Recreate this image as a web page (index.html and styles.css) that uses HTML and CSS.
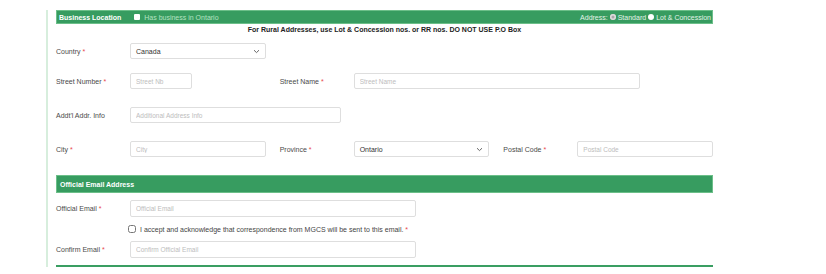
FILE: index.html
```html
<!DOCTYPE html>
<html lang="en">
<head>
  <meta charset="UTF-8">
  <title>Business Location</title>
  <link rel="stylesheet" href="styles.css">
</head>
<body>
  <div class="page">
    <div class="bar">
      <div class="bar-left">
        <span class="bar-title">Business Location</span>
        <span class="box"></span>
        <span class="muted">Has business in Ontario</span>
      </div>
      <div class="bar-right">
        Address: <span class="radio off"></span> Standard <span class="radio"></span> Lot &amp; Concession
      </div>
    </div>
    <div class="notice">For Rural Addresses, use Lot &amp; Concession nos. or RR nos. DO NOT USE P.O Box</div>

    <div class="grid row first">
      <div class="cell">
        <label>Country <b>*</b></label>
        <div class="select">Canada
          <svg width="7" height="5" viewBox="0 0 7 5"><path d="M1 1.2 L3.5 3.6 L6 1.2" fill="none" stroke="#666" stroke-width="1"/></svg>
        </div>
      </div>
    </div>

    <div class="grid row second">
      <div class="cell">
        <label>Street Number <b>*</b></label>
        <input class="short" type="text" placeholder="Street Nb">
      </div>
      <div class="cell span2">
        <label>Street Name <b>*</b></label>
        <input class="long" type="text" placeholder="Street Name">
      </div>
    </div>

    <div class="grid row">
      <div class="cell span3">
        <label>Addt'l Addr. Info</label>
        <input class="mid" type="text" placeholder="Additional Address Info">
      </div>
    </div>

    <div class="grid row">
      <div class="cell">
        <label>City <b>*</b></label>
        <input type="text" placeholder="City">
      </div>
      <div class="cell">
        <label>Province <b>*</b></label>
        <div class="select">Ontario
          <svg width="7" height="5" viewBox="0 0 7 5"><path d="M1 1.2 L3.5 3.6 L6 1.2" fill="none" stroke="#666" stroke-width="1"/></svg>
        </div>
      </div>
      <div class="cell">
        <label>Postal Code <b>*</b></label>
        <input type="text" placeholder="Postal Code">
      </div>
    </div>

    <div class="section-head">Official Email Address</div>

    <div class="email-row">
      <label>Official Email <b>*</b></label>
      <input class="long" type="text" placeholder="Official Email">
    </div>
    <div class="accept">
      <input type="checkbox">
      <span>I accept and acknowledge that correspondence from MGCS will be sent to this email. <b>*</b></span>
    </div>
    <div class="email-row">
      <label>Confirm Email <b>*</b></label>
      <input class="long" type="text" placeholder="Confirm Official Email">
    </div>

    <div class="section-end"></div>
  </div>
</body>
</html>
```

FILE: styles.css
```css
body {
  margin: 0;
  padding: 0;
  font-family: "Liberation Sans", Arial, sans-serif;
  font-size: 7px;
  background: #fff;
  color: #4a4a4a;
}
.page {
  margin-left: 46px;
  width: 657px;
  padding-left: 8px;
  border-left: 2px solid #d7eedd;
}
.bar {
  margin-top: 10px;
  height: 12px;
  background: #379c60;
  border: 1px solid #6cbf89;
  display: flex;
  justify-content: space-between;
  align-items: center;
  padding: 0 1px;
  color: #fff;
}
.bar-left {
  display: flex;
  align-items: center;
}
.bar-title {
  font-weight: bold;
  margin-left: 1px;
  margin-right: 13px;
}
.box {
  width: 6px;
  height: 6px;
  background: #fff;
  border-radius: 1px;
  margin-right: 4px;
}
.muted {
  color: #b4e2c1;
}
.bar-right {
  display: flex;
  align-items: center;
  gap: 2px;
  color: #e3f3e8;
}
.radio {
  display: inline-block;
  width: 6px;
  height: 6px;
  border-radius: 50%;
  background: #fff;
}
.radio.off {
  background: #a9a9a9;
  box-shadow: inset 0 0 0 1.5px #dcdcdc;
}
.notice {
  text-align: center;
  font-weight: bold;
  color: #222;
  line-height: 10px;
  margin-top: 1px;
}
.grid {
  display: grid;
  grid-template-columns: repeat(3, 1fr);
  column-gap: 14px;
}
.row {
  margin-top: 18px;
}
.row.first {
  margin-top: 8px;
}
.row.second {
  margin-top: 14px;
}
.cell {
  display: flex;
  align-items: center;
  height: 16px;
}
.span2 {
  grid-column: span 2;
}
.span3 {
  grid-column: span 3;
}
label {
  width: 74px;
  flex: none;
  color: #4a4a4a;
}
label b {
  color: #e8474c;
  font-weight: normal;
}
input[type="text"] {
  box-sizing: border-box;
  height: 16px;
  flex: 1;
  min-width: 0;
  border: 1px solid #dedede;
  border-radius: 2px;
  padding: 0 5px;
  font-family: inherit;
  font-size: 6.5px;
  outline: none;
}
input::placeholder {
  color: #bdbdbd;
}
input.short {
  flex: none;
  width: 62px;
}
input.long {
  flex: none;
  width: 286px;
}
input.mid {
  flex: none;
  width: 211px;
}
.select {
  box-sizing: border-box;
  height: 16px;
  flex: 1;
  border: 1px solid #dedede;
  border-radius: 2px;
  padding: 0 5px;
  display: flex;
  align-items: center;
  justify-content: space-between;
  color: #333;
}
.section-head {
  margin-top: 18px;
  height: 18px;
  box-sizing: border-box;
  background: #379c60;
  border: 1px solid #6cbf89;
  color: #fff;
  font-weight: bold;
  display: flex;
  align-items: center;
  padding-left: 3px;
}
.email-row {
  display: flex;
  align-items: center;
  height: 17px;
  margin-top: 7px;
}
.email-row input {
  height: 17px;
}
.accept {
  display: flex;
  align-items: center;
  height: 10px;
  margin-top: 7px;
  padding-left: 72px;
}
.accept input {
  width: 8px;
  height: 8px;
  margin: 0 4px 0 0;
}
.accept b {
  color: #e8474c;
  font-weight: normal;
}
.accept span {
  color: #444;
}
.section-end {
  margin-top: 7px;
  height: 2px;
  background: #3a9e62;
}
```
